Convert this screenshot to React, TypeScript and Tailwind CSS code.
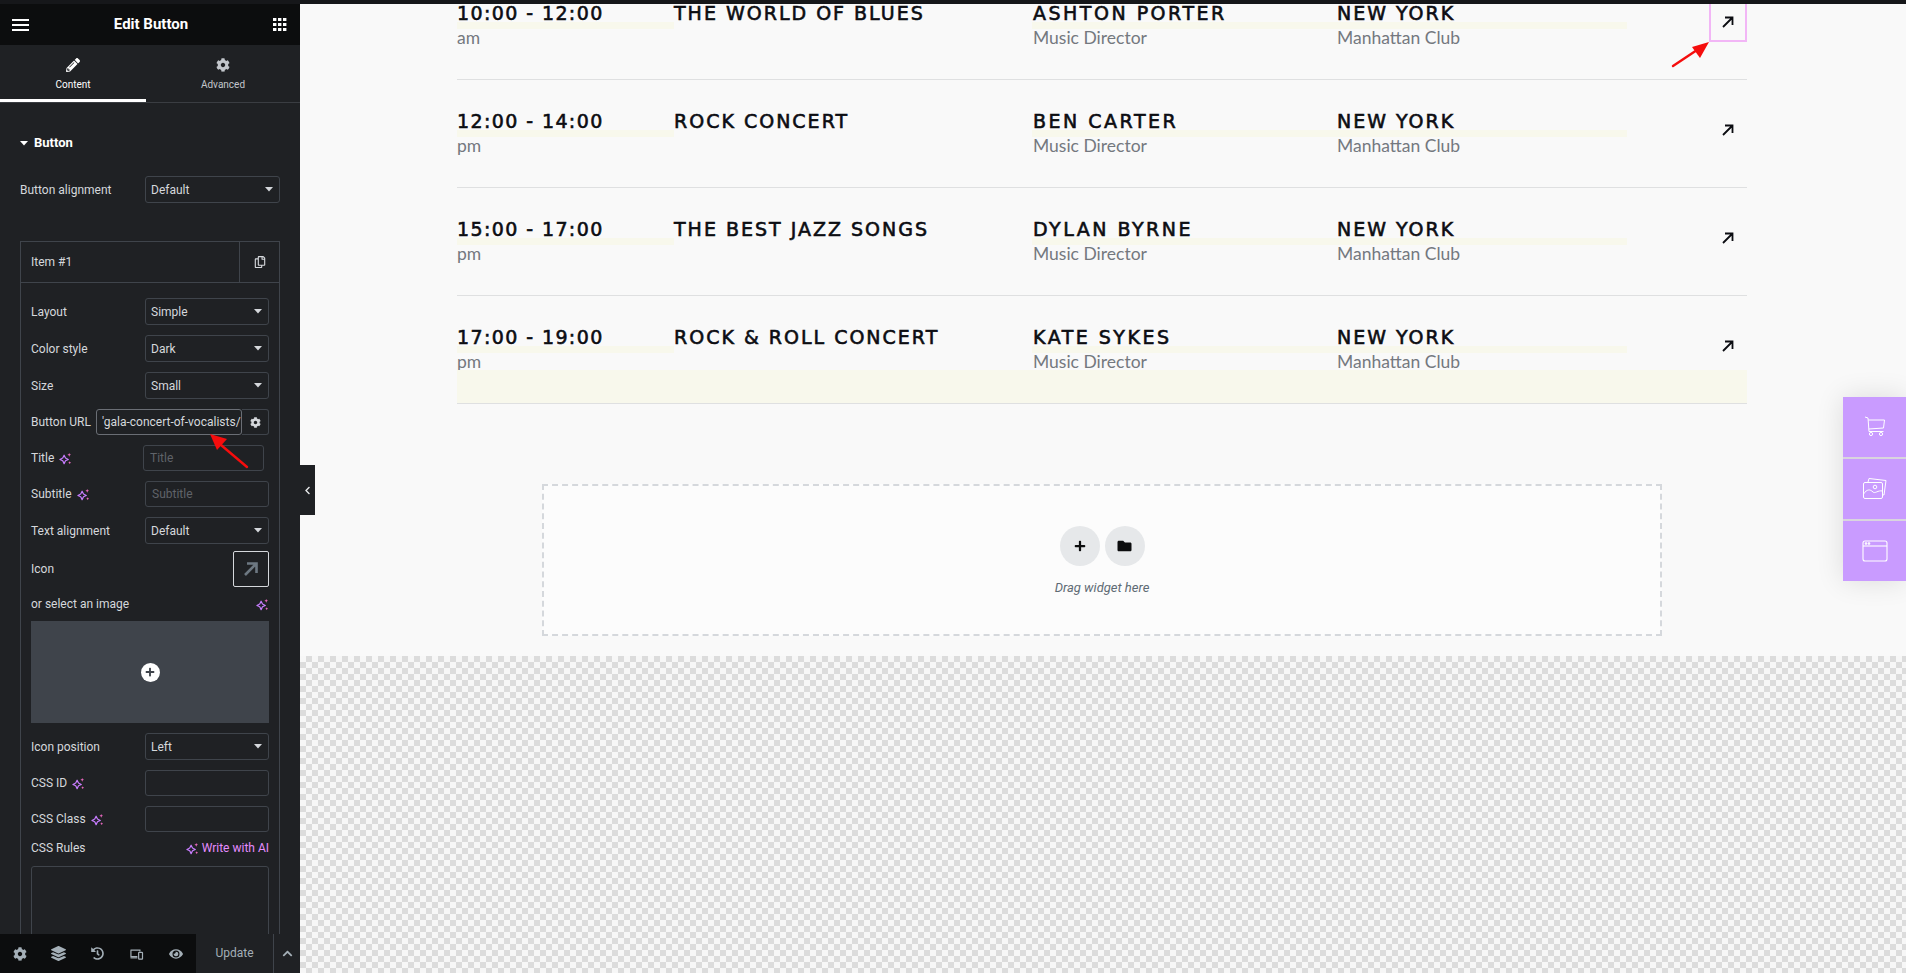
import React from "react";
import { FaPencilAlt, FaCog, FaLayerGroup, FaHistory, FaEye, FaRegCopy, FaFolder, FaChevronUp, FaChevronLeft, FaPlus } from "react-icons/fa";

const Sparkle = ({ className = "" }: { className?: string }) => (
  <svg viewBox="0 0 14 14" className={"h-[13px] w-[13px] " + className} fill="none">
    <path d="M5.5 3.5 L7 6.5 L10 8 L7 9.5 L5.5 12.5 L4 9.5 L1 8 L4 6.5 Z" stroke="#c77dff" strokeWidth="1.3" strokeLinejoin="round" />
    <path d="M11 1 L11.6 2.4 L13 3 L11.6 3.6 L11 5 L10.4 3.6 L9 3 L10.4 2.4 Z" fill="#f06bc4" />
    <path d="M11.5 10 L12 11 L13 11.5 L12 12 L11.5 13 L11 12 L10 11.5 L11 11 Z" fill="#f06bc4" />
  </svg>
);

const Caret = ({ className = "" }: { className?: string }) => (
  <svg viewBox="0 0 8 5" className={"h-[5px] w-[8px] " + className} fill="#d5d8dc">
    <path d="M0 0 H8 L4 4.6 Z" />
  </svg>
);

const Select = ({ value, width = "w-[124px]" }: { value: string; width?: string }) => (
  <div className={`flex h-[27px] ${width} items-center justify-between rounded-[3px] border border-[#3f444b] pl-[5px] pr-[6px] text-[12px] text-[#d5d8dc]`}>
    <span>{value}</span>
    <Caret />
  </div>
);

const Field = ({ label, ai, children, mt }: { label: string; ai?: boolean; children: React.ReactNode; mt: string }) => (
  <div className={`flex items-center justify-between ${mt}`}>
    <div className="flex items-center gap-[5px] text-[12px] leading-[16px] text-[#d5d8dc]">
      <span>{label}</span>
      {ai && <Sparkle />}
    </div>
    {children}
  </div>
);

const TextInput = ({ placeholder, width = "w-[124px]" }: { placeholder?: string; width?: string }) => (
  <div className={`flex h-[26px] ${width} items-center rounded-[3px] border border-[#3f444b] pl-[6px] text-[12px] text-[#5f6369]`}>{placeholder}</div>
);

const Sidebar = () => (
  <aside className="flex h-full w-[300px] shrink-0 flex-col bg-[#1f2124] font-['Roboto',sans-serif]">
    <div className="flex h-[41px] shrink-0 items-center justify-between bg-[#0c0d0e] pl-[12px] pr-[13px]">
      <div className="flex w-[17px] flex-col gap-[3px]">
        <span className="h-[2px] bg-white" />
        <span className="h-[2px] bg-white" />
        <span className="h-[2px] bg-white" />
      </div>
      <span className="text-[15px] font-bold text-white">Edit Button</span>
      <svg viewBox="0 0 14 13" className="h-[13px] w-[14px]" fill="#fff">
        {[0, 5, 10].map((x) => [0, 5, 10].map((y) => <rect key={x + "-" + y} x={x} y={y} width="3.4" height="3" />))}
      </svg>
    </div>
    <div className="flex h-[58px] shrink-0 border-b border-[#3a3d42]">
      <div className="flex w-[146px] flex-col items-center border-b-[3px] border-white pt-[13px] text-white">
        <FaPencilAlt className="h-[14px] w-[14px]" />
        <span className="mt-[6px] text-[10px] leading-[14px]">Content</span>
      </div>
      <div className="flex flex-1 flex-col items-center pt-[13px] text-[#c2c6cb]">
        <FaCog className="h-[14px] w-[14px]" />
        <span className="mt-[6px] text-[10px] leading-[14px]">Advanced</span>
      </div>
    </div>
    <div className="min-h-0 flex-1 overflow-hidden px-[20px]">
      <div className="mt-[32px] flex h-[16px] items-center gap-[6px] text-[13px] font-bold text-white">
        <Caret className="[&>path]:fill-white" />
        <span>Button</span>
      </div>
      <Field label="Button alignment" mt="mt-[25px]">
        <Select value="Default" width="w-[135px]" />
      </Field>
      <div className="mt-[38px] h-[800px] border border-[#3f444b]">
        <div className="flex h-[41px] items-center justify-between border-b border-[#3f444b]">
          <span className="pl-[10px] text-[12px] text-[#d5d8dc]">Item #1</span>
          <div className="flex h-full w-[40px] items-center justify-center border-l border-[#3f444b] text-[#d5d8dc]">
            <FaRegCopy className="h-[12px] w-[12px]" />
          </div>
        </div>
        <div className="px-[10px] pt-[15px]">
          <Field label="Layout" mt="mt-0"><Select value="Simple" /></Field>
          <Field label="Color style" mt="mt-[10px]"><Select value="Dark" /></Field>
          <Field label="Size" mt="mt-[10px]"><Select value="Small" /></Field>
          <Field label="Button URL" mt="mt-[10px]">
            <div className="flex h-[26px]">
              <div className="flex w-[146px] items-center overflow-hidden whitespace-nowrap rounded-[3px] border border-[#6a6e75] pl-[5px] text-[12px] text-[#d5d8dc]">'gala-concert-of-vocalists/</div>
              <div className="flex w-[27px] items-center justify-center rounded-r-[3px] border border-l-0 border-[#3f444b] text-[#d5d8dc]">
                <FaCog className="h-[11px] w-[11px]" />
              </div>
            </div>
          </Field>
          <Field label="Title" ai mt="mt-[10px]">
            <div className="mr-[5px]"><TextInput placeholder="Title" width="w-[121px]" /></div>
          </Field>
          <Field label="Subtitle" ai mt="mt-[10px]"><TextInput placeholder="Subtitle" /></Field>
          <Field label="Text alignment" mt="mt-[10px]"><Select value="Default" /></Field>
          <Field label="Icon" mt="mt-[7px]">
            <div className="flex h-[36px] w-[36px] items-center justify-center rounded-[2px] border border-[#d5d8dc]">
              <svg viewBox="0 0 16 16" className="h-[16px] w-[16px]" fill="none" stroke="#6d7882" strokeWidth="2.6">
                <path d="M2 14 L13 3 M4 2.5 H13.5 V12" />
              </svg>
            </div>
          </Field>
          <div className="mt-[9px] flex h-[16px] items-center justify-between text-[12px] text-[#d5d8dc]">
            <span>or select an image</span>
            <Sparkle />
          </div>
          <div className="mt-[9px] flex h-[102px] items-center justify-center bg-[#3f444b]">
            <div className="flex h-[19px] w-[19px] items-center justify-center rounded-full bg-white text-[#3f444b]">
              <FaPlus className="h-[10px] w-[10px]" />
            </div>
          </div>
          <Field label="Icon position" mt="mt-[10px]"><Select value="Left" /></Field>
          <Field label="CSS ID" ai mt="mt-[10px]"><TextInput /></Field>
          <Field label="CSS Class" ai mt="mt-[10px]"><TextInput /></Field>
          <div className="mt-[8px] flex h-[16px] items-center justify-between text-[12px] text-[#d5d8dc]">
            <span>CSS Rules</span>
            <span className="flex items-center gap-[3px] text-[#e58cff]"><Sparkle />Write with AI</span>
          </div>
          <div className="mt-[10px] h-[150px] rounded-[3px] border border-[#3f444b]" />
        </div>
      </div>
    </div>
    <div className="flex h-[39px] shrink-0 bg-[#1f2124]">
      <div className="flex w-[196px] items-center bg-[#0c0d0e] text-[#a4afb7]">
        <span className="flex w-[39px] justify-center"><FaCog className="h-[14px] w-[14px]" /></span>
        <span className="flex w-[39px] justify-center"><FaLayerGroup className="h-[15px] w-[15px]" /></span>
        <span className="flex w-[39px] justify-center"><FaHistory className="h-[13px] w-[13px]" /></span>
        <span className="flex w-[39px] justify-center">
          <svg viewBox="0 0 16 14" className="h-[12px] w-[15px]" fill="none" stroke="#a4afb7" strokeWidth="1.4">
            <path d="M9 10H1.5V2.5H1 H12V4" />
            <rect x="10.5" y="5" width="4.5" height="8" rx="0.6" />
            <path d="M1 11.5H9" />
          </svg>
        </span>
        <span className="flex w-[39px] justify-center"><FaEye className="h-[14px] w-[14px]" /></span>
      </div>
      <div className="flex w-[77px] items-center justify-center pb-[2px] text-[12px] text-[#a4afb7]">Update</div>
      <div className="flex flex-1 items-center justify-center border-l border-[#3f444b] text-[#a4afb7]">
        <FaChevronUp className="h-[11px] w-[11px]" />
      </div>
    </div>
  </aside>
);

const rows = [
  { t: "10:00 - 12:00", s: "am", title: "THE WORLD OF BLUES", name: "ASHTON PORTER" },
  { t: "12:00 - 14:00", s: "pm", title: "ROCK CONCERT", name: "BEN CARTER" },
  { t: "15:00 - 17:00", s: "pm", title: "THE BEST JAZZ SONGS", name: "DYLAN BYRNE" },
  { t: "17:00 - 19:00", s: "pm", title: "ROCK & ROLL CONCERT", name: "KATE SYKES" },
];

const base = "h-[17px] whitespace-nowrap text-[19px] leading-[17px] text-[#0c0d12] [-webkit-text-stroke:0.6px_#0c0d12] font-['DejaVu_Sans',sans-serif]";
const time = base + " tracking-[1.4px]";
const head = base + " tracking-[2px]";
const person = base + " tracking-[2.5px]";
const sub = "text-[17.5px] leading-[18px] text-[#74787f] font-['Lato',sans-serif]";

const Arrow = () => (
  <svg viewBox="0 0 12 12" className="h-[12px] w-[12px]" fill="none" stroke="#0c0d12" strokeWidth="1.8">
    <path d="M1 11 L10.5 1.5 M3 1.5 H10.5 V9" />
  </svg>
);

const Row = ({ r, i }: { r: (typeof rows)[number]; i: number }) => (
  <div className="relative h-[108px] border-b border-[#dfe0e1]">
    <div className="grid grid-cols-[217px_358px_305px_290px_1fr] pt-[30px]">
      <div className="pt-[3px]">
        <div className={time}>{r.t}</div>
        <div className="h-[7px] bg-[#f8f8ec]" />
        <div className={sub}>{r.s}</div>
      </div>
      <div className="pt-[3px]"><div className={head}>{r.title}</div></div>
      <div className="pt-[3px]">
        <div className={person + " pl-px"}>{r.name}</div>
        <div className="h-[7px] bg-[#f8f8ec]" />
        <div className={sub + " pl-px"}>Music Director</div>
      </div>
      <div className="pt-[3px]">
        <div className={head}>NEW YORK</div>
        <div className="h-[7px] bg-[#f8f8ec]" />
        <div className={sub}>Manhattan Club</div>
      </div>
      <div className="flex justify-end">
        <div className={`flex h-[40px] w-[38px] items-center justify-center ${i === 0 ? "border-2 border-[#f2b6f6]" : ""}`}>
          <Arrow />
        </div>
      </div>
    </div>
    {i === 3 && <div className="absolute bottom-0 left-0 right-0 h-[33px] bg-[#f8f8ec]" />}
  </div>
);

const RedArrow = ({ className, d, head: h, vb }: { className: string; d: string; head: string; vb: string }) => (
  <svg viewBox={vb} className={"pointer-events-none absolute " + className} fill="none">
    <path d={d} stroke="#f50d0d" strokeWidth="2.4" strokeLinecap="round" />
    <path d={h} fill="#f50d0d" />
  </svg>
);

const SideTab = ({ children }: { children: React.ReactNode }) => (
  <div className="flex h-[60px] w-[63px] items-center justify-center bg-[#c99bff]">{children}</div>
);

export default function App() {
  return (
    <div className="relative flex h-screen w-full flex-col overflow-hidden bg-[#f9f9f9]">
      <div className="h-[4px] shrink-0 bg-[#16171a]" />
      <div className="flex min-h-0 flex-1">
        <Sidebar />
        <main className="relative flex min-w-0 flex-1 flex-col overflow-hidden">
          <div className="-mt-[32px] flex h-[684px] shrink-0 flex-col bg-[#f9f9f9]">
            <div className="ml-[157px] w-[1290px]">
              {rows.map((r, i) => <Row key={r.t} r={r} i={i} />)}
            </div>
            <div className="ml-[242px] mt-[80px] flex h-[152px] w-[1120px] flex-col items-center border-2 border-dashed border-[#d5d8dc] bg-[#fcfcfc] pt-[40px]">
              <div className="flex gap-[5px]">
                <div className="flex h-[40px] w-[40px] items-center justify-center rounded-full bg-[#e6e8ea] text-[#0c0d0e]">
                  <FaPlus className="h-[12px] w-[12px]" />
                </div>
                <div className="flex h-[40px] w-[40px] items-center justify-center rounded-full bg-[#e6e8ea] text-[#0c0d0e]">
                  <FaFolder className="h-[14px] w-[15px]" />
                </div>
              </div>
              <div className="mt-[12px] font-['Roboto',sans-serif] text-[13px] italic text-[#5f6b74]">Drag widget here</div>
            </div>
          </div>
          <div className="min-h-0 flex-1 bg-[repeating-conic-gradient(#dcdcdc_0_25%,#f7f7f7_0_50%)] [background-size:12px_12px]" />
        </main>
      </div>

      <div className="absolute left-[300px] top-[465px] flex h-[50px] w-[15px] items-center justify-center bg-[#1f2124] text-[#e6e8ea]">
        <FaChevronLeft className="h-[9px] w-[9px]" />
      </div>

      <div className="absolute right-0 top-[397px] flex flex-col gap-[2px] bg-[#d9d4de] shadow-[0_0_28px_rgba(0,0,0,0.12)]">
        <SideTab>
          <svg viewBox="0 0 24 24" className="h-[24px] w-[24px]" fill="none" stroke="#fff" strokeWidth="1">
            <path d="M2 2 L5 3 L6 16.5 H20.5 M5.3 5 H21.5 L20.5 13 L5.8 14" />
            <circle cx="8" cy="19" r="1.6" /><circle cx="18" cy="19" r="1.6" />
          </svg>
        </SideTab>
        <SideTab>
          <svg viewBox="0 0 26 24" className="h-[24px] w-[26px]" fill="none" stroke="#fff" strokeWidth="1">
            <path d="M6 5 L7 1.5 L24 3.5 L22 18 L20 17.7" />
            <rect x="1.5" y="5.5" width="19" height="16" rx="1.5" />
            <circle cx="13" cy="10" r="1.8" />
            <path d="M1.5 17 C5 12 8 12 11 15 C13 17 16 13 20.5 14" />
          </svg>
        </SideTab>
        <SideTab>
          <svg viewBox="0 0 26 22" className="h-[22px] w-[26px]" fill="none" stroke="#fff" strokeWidth="1.1">
            <rect x="1" y="1" width="24" height="20" rx="2" />
            <path d="M1 6 H25" />
            <circle cx="4" cy="3.5" r="0.8" /><circle cx="7" cy="3.5" r="0.8" />
          </svg>
        </SideTab>
      </div>

      <RedArrow className="left-[205px] top-[430px] h-[42px] w-[46px]" vb="0 0 46 42" d="M42 37 L16 15" head="M5 4 L22 9 L12 20 Z" />
      <RedArrow className="left-[1669px] top-[38px] h-[32px] w-[44px]" vb="0 0 44 32" d="M4 28 L28 12" head="M40 4 L31 20 L23 9 Z" />
    </div>
  );
}
